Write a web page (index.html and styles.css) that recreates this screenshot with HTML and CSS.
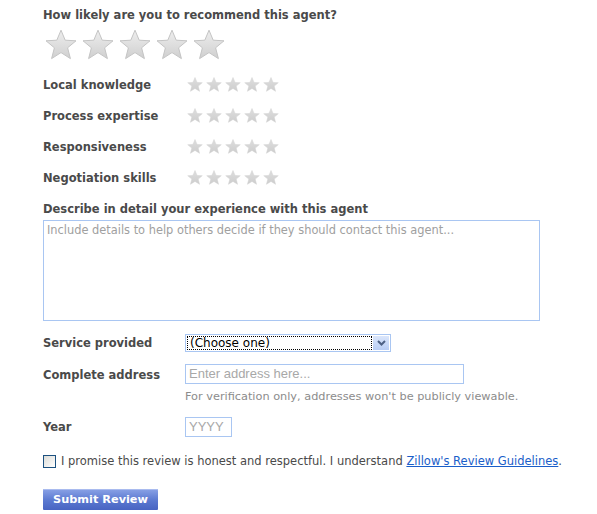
FILE: index.html
```html
<!DOCTYPE html>
<html>
<head>
<meta charset="utf-8">
<link rel="stylesheet" href="styles.css">
</head>
<body>
<svg width="0" height="0" class="defs">
  <defs>
    <linearGradient id="gbig" x1="0" y1="0" x2="0" y2="1">
      <stop offset="0" stop-color="#eeeeee"/>
      <stop offset="1" stop-color="#cfcfcf"/>
    </linearGradient>
    <linearGradient id="gsm" x1="0" y1="0" x2="0" y2="1">
      <stop offset="0" stop-color="#dedede"/>
      <stop offset="1" stop-color="#cdcdcd"/>
    </linearGradient>
    <symbol id="star" viewBox="0 0 32 31">
      <path d="M16 1.2 L20.2 11.2 L31 11.8 L22.6 18.8 L25.4 29.6 L16 23.6 L6.6 29.6 L9.4 18.8 L1 11.8 L11.8 11.2 Z"/>
    </symbol>
  </defs>
</svg>
<form class="review">
  <h2 class="title">How likely are you to recommend this agent?</h2>
  <div class="big-stars">
    <svg class="bstar"><use href="#star"/></svg>
    <svg class="bstar"><use href="#star"/></svg>
    <svg class="bstar"><use href="#star"/></svg>
    <svg class="bstar"><use href="#star"/></svg>
    <svg class="bstar"><use href="#star"/></svg>
  </div>
  <div class="ratings">
    <div class="row"><span class="label">Local knowledge</span><span class="small-stars"><svg class="sstar"><use href="#star"/></svg><svg class="sstar"><use href="#star"/></svg><svg class="sstar"><use href="#star"/></svg><svg class="sstar"><use href="#star"/></svg><svg class="sstar"><use href="#star"/></svg></span></div>
    <div class="row"><span class="label">Process expertise</span><span class="small-stars"><svg class="sstar"><use href="#star"/></svg><svg class="sstar"><use href="#star"/></svg><svg class="sstar"><use href="#star"/></svg><svg class="sstar"><use href="#star"/></svg><svg class="sstar"><use href="#star"/></svg></span></div>
    <div class="row"><span class="label">Responsiveness</span><span class="small-stars"><svg class="sstar"><use href="#star"/></svg><svg class="sstar"><use href="#star"/></svg><svg class="sstar"><use href="#star"/></svg><svg class="sstar"><use href="#star"/></svg><svg class="sstar"><use href="#star"/></svg></span></div>
    <div class="row"><span class="label">Negotiation skills</span><span class="small-stars"><svg class="sstar"><use href="#star"/></svg><svg class="sstar"><use href="#star"/></svg><svg class="sstar"><use href="#star"/></svg><svg class="sstar"><use href="#star"/></svg><svg class="sstar"><use href="#star"/></svg></span></div>
  </div>
  <div class="label describe">Describe in detail your experience with this agent</div>
  <div class="textarea"><span class="ph">Include details to help others decide if they should contact this agent...</span></div>

  <div class="frow service">
    <span class="label">Service provided</span>
    <div class="select"><span class="sel-text">(Choose one)</span><span class="sel-btn"><svg width="9" height="6" viewBox="0 0 9 6"><path d="M1 1 L4.5 4.5 L8 1" fill="none" stroke="#4d6185" stroke-width="2"/></svg></span></div>
  </div>
  <div class="frow address">
    <span class="label">Complete address</span>
    <div class="addr-col">
      <div class="input addr"><span class="ph2">Enter address here...</span></div>
      <div class="hint">For verification only, addresses won't be publicly viewable.</div>
    </div>
  </div>
  <div class="frow year">
    <span class="label">Year</span>
    <div class="input yr"><span class="ph2">YYYY</span></div>
  </div>
  <div class="promise">
    <span class="checkbox"></span>
    <span class="ptext">I promise this review is honest and respectful. I understand <a href="#">Zillow's Review Guidelines</a>.</span>
  </div>
  <button type="button" class="submit">Submit Review</button>
</form>
</body>
</html>
```
FILE: styles.css
```css
* { box-sizing: border-box; }
html, body { margin: 0; padding: 0; background: #fff; }
body { font-family: "DejaVu Sans", Verdana, sans-serif; color: #4a4a4a; }
.defs { position: absolute; width: 0; height: 0; }
.review { padding: 7px 0 0 43px; }
.title { font-size: 11.5px; font-weight: bold; margin: 0; line-height: 16px; color: #4a4a4a; }
.big-stars { display: flex; gap: 5px; margin: 6px 0 0 2px; height: 32px; }
.bstar { width: 32px; height: 31px; fill: url(#gbig); stroke: #c4c4c4; stroke-width: 1; }
.ratings { margin-top: 8px; }
.row { display: flex; align-items: center; height: 31px; }
.label { font-size: 11.5px; font-weight: bold; color: #4a4a4a; }
.row .label { width: 144px; }
.small-stars { display: flex; gap: 3px; }
.sstar { width: 16px; height: 15px; fill: url(#gsm); stroke: #d0d0d0; stroke-width: 1; }
.describe { margin-top: 8px; line-height: 16px; }
.textarea { width: 497px; height: 101px; border: 1px solid #a9c6f2; margin-top: 3px; padding: 2px 3px 0; font-size: 11.4px; line-height: 14px; }
.ph { font-size: 11.4px; color: #a0a0a0; }
.frow { display: flex; }
.frow .label { width: 142px; flex: none; }
.service { margin-top: 13px; align-items: center; }
.select { width: 206px; height: 18px; border: 1px solid #a9c6f2; display: flex; padding: 1px; }
.sel-text { flex: 1; border: 1px dotted #000; font-size: 12px; color: #000; line-height: 12px; padding-left: 2px; }
.sel-btn { width: 16px; background: linear-gradient(#dbe6fb, #b8cdf5); display: flex; align-items: center; justify-content: center; margin-left: 1px; }
.address { margin-top: 12px; }
.address .label { padding-top: 4px; }
.input { border: 1px solid #a9c6f2; height: 20px; padding: 0 3px; display: flex; align-items: center; }
.addr { width: 279px; }
.ph2 { font-size: 13px; color: #a8a8a8; font-family: "Liberation Sans", Arial, sans-serif; line-height: 14px; }
.hint { font-size: 11.3px; color: #8c8c8c; margin-top: 6px; }
.year { margin-top: 14px; align-items: center; }
.yr { width: 47px; height: 20px; }
.promise { display: flex; align-items: center; margin-top: 17px; gap: 5px; }
.checkbox { width: 13px; height: 13px; border: 1px solid #1c5180; background: linear-gradient(135deg, #dcdcd7, #fff); flex: none; }
.ptext { font-size: 11.5px; color: #4a4a4a; }
.ptext a { color: #1a5ec9; }
.submit { display: block; margin-top: 21px; width: 115px; height: 21px; border: 0; border-radius: 1px; background: linear-gradient(#8aa2e6, #5a78d0 55%, #4864c2); color: #fff; font-family: "DejaVu Sans", Verdana, sans-serif; font-weight: bold; font-size: 11.3px; padding: 0; box-shadow: inset 0 1px 0 #a9bbef; }
```
